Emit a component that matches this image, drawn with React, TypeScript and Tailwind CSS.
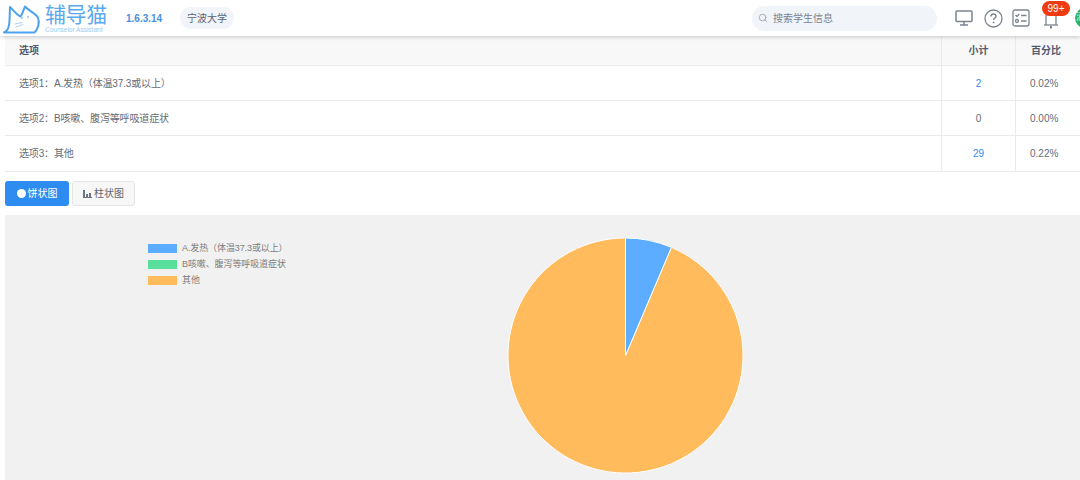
import React from "react";
import { Search } from "lucide-react";

const font = "font-['Liberation_Sans','Noto_Sans_CJK_SC',sans-serif]";

function Logo() {
  return (
    <svg width="40" height="33" viewBox="0 0 40 33" fill="none" className="shrink-0">
      <path d="M2 30.5 C6 29 7.5 24 7.5 18 L8 5 C12 9 15 13 18.5 14.5 C20 13 21.5 8 23 4.5 C27 9 33 11 36 15.5 C38 21 36 27 32.5 30.5 Z" stroke="#4FA3EE" strokeWidth="2" strokeLinejoin="round" />
      <circle cx="20" cy="16" r="1" fill="#8CC4F5" />
      <circle cx="26" cy="15" r="1" fill="#8CC4F5" />
      <path d="M13 22 l7 -1.5 M14 25 l7 -2.5" stroke="#A9D3F7" strokeWidth="1" strokeLinecap="round" />
    </svg>
  );
}

function Monitor() {
  return (
    <svg width="18" height="16" viewBox="0 0 18 16" fill="none" stroke="#7B8490" strokeWidth="1.5" className="shrink-0">
      <rect x="1" y="1" width="16" height="10.5" rx="1" />
      <path d="M9 11.5 V14.5 M5 15 H13" />
    </svg>
  );
}

function Help() {
  return (
    <svg width="19" height="19" viewBox="0 0 19 19" fill="none" className="shrink-0">
      <circle cx="9.5" cy="9.5" r="8.5" stroke="#7B8490" strokeWidth="1.3" />
      <path d="M7 7.5 C7 5.8 8.2 5 9.5 5 C11 5 12 6 12 7.2 C12 9 9.6 9 9.6 11" stroke="#7B8490" strokeWidth="1.5" fill="none" />
      <circle cx="9.6" cy="13.4" r="0.9" fill="#7B8490" />
    </svg>
  );
}

function Checklist() {
  return (
    <svg width="18" height="18" viewBox="0 0 18 18" fill="none" stroke="#7B8490" strokeWidth="1.3" className="shrink-0">
      <rect x="1" y="1" width="16" height="16" rx="2" />
      <path d="M3.5 6 l1.5 1.5 l2.2 -2.5" />
      <path d="M9 6.5 H14.5 M9 12 H14.5" />
      <circle cx="5" cy="12" r="1.5" />
    </svg>
  );
}

function Bell() {
  return (
    <svg width="14" height="18" viewBox="0 0 14 18" fill="none" stroke="#7B8490" strokeWidth="1.3" className="shrink-0">
      <path d="M2 14 V6 C2 3 4 1 7 1 C10 1 12 3 12 6 V14" />
      <path d="M0 14 H14" />
      <path d="M7 15 V17.5" strokeWidth="2" />
    </svg>
  );
}

function PieIcon() {
  return <span className="w-[9px] h-[9px] rounded-full bg-white shrink-0" />;
}

function BarIcon() {
  return (
    <svg width="9" height="8" viewBox="0 0 9 8" fill="#6B7480" className="shrink-0">
      <rect x="0" y="0" width="2" height="8" />
      <rect x="3" y="4" width="2" height="4" />
      <rect x="6" y="3" width="2" height="5" />
      <rect x="0" y="7" width="9" height="1" />
    </svg>
  );
}

const rows = [
  { label: "选项1：A.发热（体温37.3或以上）", n: "2", link: true, pct: "0.02%", h: "h-[35px]" },
  { label: "选项2：B咳嗽、腹泻等呼吸道症状", n: "0", link: false, pct: "0.00%", h: "h-[35px]" },
  { label: "选项3：其他", n: "29", link: true, pct: "0.22%", h: "h-[36px]" },
];

const legend = [
  { c: "bg-[#5CADFF]", t: "A.发热（体温37.3或以上）" },
  { c: "bg-[#57DF9B]", t: "B咳嗽、腹泻等呼吸道症状" },
  { c: "bg-[#FFBB5C]", t: "其他" },
];

function Pie() {
  const r = 117.5;
  const cx = 118.5;
  const cy = 118.5;
  const angle = (23 * Math.PI) / 180;
  const x = cx + r * Math.sin(angle);
  const y = cy - r * Math.cos(angle);
  return (
    <svg width="237" height="237" viewBox="0 0 237 237" className="shrink-0">
      <path d={`M${cx} ${cy} L${x} ${y} A${r} ${r} 0 1 1 ${cx} ${cy - r} Z`} fill="#FFBB5C" stroke="#fff" strokeWidth="1" />
      <path d={`M${cx} ${cy} L${cx} ${cy - r} A${r} ${r} 0 0 1 ${x} ${y} Z`} fill="#5CADFF" stroke="#fff" strokeWidth="1" />
    </svg>
  );
}

export default function App() {
  return (
    <div className={`${font} w-[1080px] h-[480px] overflow-hidden bg-white flex flex-col`}>
      <header className="h-[36px] shrink-0 flex items-center bg-white shadow-[0_1px_4px_rgba(0,0,0,0.2)] relative z-10 overflow-hidden">
        <div className="ml-[2px] w-[41px] shrink-0"><Logo /></div>
        <div className="ml-[2px] flex flex-col items-start w-[62px] shrink-0">
          <span className="text-[21px] leading-[23px] text-[#5AA9F0] tracking-[-0.4px] whitespace-nowrap">辅导猫</span>
          <span className="text-[6.5px] leading-[7px] text-[#9CCBF5] whitespace-nowrap">Counselor Assistant</span>
        </div>
        <span className="ml-[19px] text-[10px] font-bold text-[#4A90E2] w-[36px] shrink-0">1.6.3.14</span>
        <span className="ml-[18px] h-[22px] w-[54px] shrink-0 rounded-full bg-[#F1F4F9] flex items-center justify-center text-[10px] text-[#5A6270]">宁波大学</span>
        <div className="ml-[518px] w-[185px] shrink-0 h-[25px] rounded-full bg-[#F1F4F9] flex items-center pl-[6px] gap-[5px] text-[10px] text-[#7A828E]">
          <Search size={10} color="#9AA1AB" />
          <span>搜索学生信息</span>
        </div>
        <div className="ml-[18px] flex items-center shrink-0"><Monitor /></div>
        <div className="ml-[11px] flex items-center shrink-0"><Help /></div>
        <div className="ml-[9px] flex items-center shrink-0"><Checklist /></div>
        <div className="ml-[14px] relative flex items-center mt-[4px] shrink-0">
          <Bell />
          <span className="absolute -top-[10px] -left-[2px] w-[28px] h-[15px] rounded-full bg-[#EE3B12] text-white text-[10px] flex items-center justify-center">99+</span>
        </div>
        <div className="ml-[17px] w-[20px] h-[20px] rounded-full bg-[#27B36A] shrink-0 flex items-center pl-[1px] text-[9px] text-[#D7F5E4] overflow-hidden">清</div>
      </header>

      <main className="pl-[5px] flex-1 min-h-0 flex flex-col">
        <div className="text-[10px] text-[#666C76]">
          <div className="flex h-[30px] bg-[#F8F8F9] border-b border-[#E9EAEC] font-bold text-[#515A6E]">
            <div className="flex-1 flex items-center pl-[14px]">选项</div>
            <div className="w-[74px] flex items-center justify-center border-l border-[#E9EAEC]">小计</div>
            <div className="w-[65px] flex items-center pl-[15px] border-l border-[#E9EAEC]">百分比</div>
          </div>
          {rows.map((r) => (
            <div key={r.n} className={`flex ${r.h} border-b border-[#E9EAEC]`}>
              <div className="flex-1 flex items-center pl-[14px] tracking-[-0.15px]">{r.label}</div>
              <div className={`w-[74px] flex items-center justify-center border-l border-[#E9EAEC] ${r.link ? "text-[#2D8CF0]" : ""}`}>{r.n}</div>
              <div className="w-[65px] flex items-center pl-[14px] border-l border-[#E9EAEC]">{r.pct}</div>
            </div>
          ))}
        </div>

        <div className="mt-[9px] flex gap-[3px] text-[10px]">
          <button className="w-[64px] h-[25px] rounded-[3px] bg-[#2D8CF0] text-white flex items-center justify-center gap-[2px]">
            <PieIcon />饼状图
          </button>
          <button className="w-[63px] h-[25px] rounded-[3px] bg-[#F7F7F7] border border-[#E5E6E8] text-[#5F6670] flex items-center justify-center gap-[2px]">
            <BarIcon />柱状图
          </button>
        </div>

        <div className="mt-[9px] flex-1 min-h-0 bg-[#F1F1F1] flex items-start overflow-hidden">
          <div className="ml-[143px] mt-[28px] w-[359px] flex flex-col gap-[5px] shrink-0">
            {legend.map((l) => (
              <div key={l.t} className="flex items-center h-[11px] gap-[5px] text-[9px] text-[#7C7C7C] whitespace-nowrap tracking-[-0.1px]">
                <span className={`w-[29px] h-[9px] ${l.c}`} />
                {l.t}
              </div>
            ))}
          </div>
          <div className="mt-[22px]"><Pie /></div>
        </div>
      </main>
    </div>
  );
}
